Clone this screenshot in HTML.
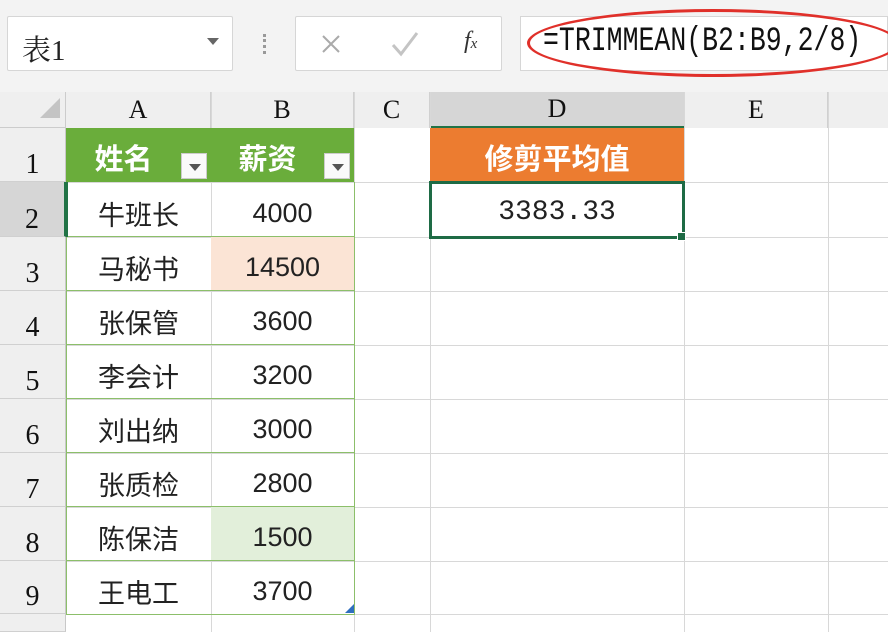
<!DOCTYPE html>
<html><head><meta charset="utf-8"><style>
*{margin:0;padding:0;box-sizing:border-box}
body{width:888px;height:632px;overflow:hidden;background:#fff;position:relative;font-family:"Liberation Sans","Noto Sans CJK SC",sans-serif}
.a{position:absolute}
.hd{background:#efefef;color:#111;font-family:"Liberation Serif","Noto Serif CJK SC",serif;font-size:26px;display:flex;align-items:center;justify-content:center}
.rn{background:#efefef;color:#111;font-family:"Liberation Serif",serif;font-size:28px;display:flex;align-items:flex-end;justify-content:center;padding-bottom:0px;border-bottom:1px solid #d0d0d0;border-right:1px solid #c8c8c8}
.c{display:flex;align-items:center;justify-content:center;font-size:27px;color:#222;padding-top:7px}
.vl{position:absolute;top:92px;bottom:0;width:1px;background:#d8d8d8}
.hl{position:absolute;left:66px;right:0;height:1px;background:#d8d8d8}
.dd{position:absolute;width:26px;height:26px;background:#fafafa;border:1px solid #ccc;right:4px;bottom:3px}
.dd:after{content:"";position:absolute;left:7px;top:10px;border-left:6px solid transparent;border-right:6px solid transparent;border-top:7px solid #555}
</style></head><body>
<div class="a" style="left:0;top:0;width:888px;height:92px;background:#f3f3f3"></div>
<div class="a" style="left:7px;top:16px;width:226px;height:55px;background:#fff;border:1px solid #d6d6d6;border-radius:2px"></div>
<div class="a" style="left:22px;top:28px;font-size:29px;color:#222;font-family:'Liberation Serif','Noto Serif CJK SC',serif">表1</div>
<div class="a" style="left:207px;top:38px;border-left:6px solid transparent;border-right:6px solid transparent;border-top:7px solid #666"></div>
<div class="a" style="left:263px;top:34px;width:3px;height:20px;border-left:3px dotted #999"></div>
<div class="a" style="left:295px;top:16px;width:207px;height:55px;background:#fff;border:1px solid #d6d6d6;border-radius:2px"></div>
<svg class="a" style="left:320px;top:33px" width="22" height="22"><path d="M3 3L19 19M19 3L3 19" stroke="#aaa" stroke-width="2"/></svg>
<svg class="a" style="left:390px;top:30px" width="30" height="28"><path d="M3 15L11 24L27 3" stroke="#c4c4c4" stroke-width="3" fill="none"/></svg>
<div class="a" style="left:464px;top:28px;font-size:24px;color:#333;font-style:italic;font-family:'Liberation Serif',serif">f<span style="font-size:15px">x</span></div>
<div class="a" style="left:520px;top:16px;width:368px;height:55px;background:#fff;border:1px solid #d6d6d6"></div>
<div class="a" style="left:543px;top:23px;font-size:34px;color:#111;font-family:'Liberation Mono',monospace;transform:scaleX(0.78);transform-origin:left;white-space:nowrap">=TRIMMEAN(B2:B9,2/8)</div>
<div class="a" style="left:527px;top:9px;width:372px;height:68px;border:3px solid #e0302a;border-radius:50%"></div>
<!-- column headers -->
<div class="a hd" style="left:0;top:92px;width:66px;height:36px;border-right:1px solid #ccc;border-bottom:1px solid #ccc"></div>
<div class="a" style="left:40px;top:98px;width:0;height:0;border-left:20px solid transparent;border-bottom:20px solid #c4c4c4"></div>
<div class="a hd" style="left:66px;top:92px;width:145px;height:36px;border-right:1px solid #d0d0d0">A</div>
<div class="a hd" style="left:211px;top:92px;width:143px;height:36px;border-right:1px solid #d0d0d0">B</div>
<div class="a hd" style="left:354px;top:92px;width:76px;height:36px;border-right:1px solid #d0d0d0">C</div>
<div class="a hd" style="left:430px;top:92px;width:254px;height:36px;background:#d6d6d6;border-bottom:2px solid #217346">D</div>
<div class="a hd" style="left:684px;top:92px;width:144px;height:36px;border-left:1px solid #d0d0d0;border-right:1px solid #d0d0d0">E</div>
<div class="a hd" style="left:828px;top:92px;width:60px;height:36px"></div>
<!-- grid -->
<div class="vl" style="left:354px"></div><div class="vl" style="left:430px"></div><div class="vl" style="left:684px"></div><div class="vl" style="left:828px"></div>
<div class="vl" style="left:211px"></div>
<div class="hl" style="top:182px"></div><div class="hl" style="top:237px"></div><div class="hl" style="top:291px"></div><div class="hl" style="top:345px"></div><div class="hl" style="top:399px"></div><div class="hl" style="top:453px"></div><div class="hl" style="top:507px"></div><div class="hl" style="top:561px"></div><div class="hl" style="top:614px"></div>
<!-- row numbers -->
<div class="a rn" style="left:0;top:128px;width:66px;height:54px">1</div>
<div class="a rn" style="left:0;top:182px;width:66px;height:55px;background:#d6d6d6;border-right:2px solid #217346">2</div>
<div class="a rn" style="left:0;top:237px;width:66px;height:54px">3</div>
<div class="a rn" style="left:0;top:291px;width:66px;height:54px">4</div>
<div class="a rn" style="left:0;top:345px;width:66px;height:54px">5</div>
<div class="a rn" style="left:0;top:399px;width:66px;height:54px">6</div>
<div class="a rn" style="left:0;top:453px;width:66px;height:54px">7</div>
<div class="a rn" style="left:0;top:507px;width:66px;height:54px">8</div>
<div class="a rn" style="left:0;top:561px;width:66px;height:53px">9</div>
<div class="a rn" style="left:0;top:614px;width:66px;height:18px"></div>
<!-- table header -->
<div class="a" style="left:66px;top:128px;width:288px;height:54px;background:#6aad3b"></div>
<div class="a c" style="left:66px;top:128px;width:145px;height:54px;color:#fff;font-weight:bold;font-size:29px;padding-right:30px;padding-top:4px">姓名<div class="dd"></div></div>
<div class="a c" style="left:211px;top:128px;width:143px;height:54px;color:#fff;font-weight:bold;font-size:29px;padding-right:30px;padding-top:4px">薪资<div class="dd"></div></div>
<div class="a c" style="left:430px;top:128px;width:254px;height:54px;background:#ec7c30;color:#fff;font-weight:bold;font-size:29px;padding-top:4px">修剪平均值</div>
<!-- table body -->
<div class="a" style="left:211px;top:237px;width:143px;height:54px;background:#fbe4d5"></div>
<div class="a" style="left:211px;top:507px;width:143px;height:54px;background:#e2efda"></div>
<div class="a" style="left:66px;top:182px;width:289px;height:433px;border-left:1px solid #8cbf6a;border-right:1px solid #8cbf6a;border-bottom:1px solid #8cbf6a"></div>
<div class="a" style="left:66px;top:236px;width:289px;height:1px;background:#8cbf6a"></div>
<div class="a" style="left:66px;top:290px;width:289px;height:1px;background:#8cbf6a"></div>
<div class="a" style="left:66px;top:344px;width:289px;height:1px;background:#8cbf6a"></div>
<div class="a" style="left:66px;top:398px;width:289px;height:1px;background:#8cbf6a"></div>
<div class="a" style="left:66px;top:452px;width:289px;height:1px;background:#8cbf6a"></div>
<div class="a" style="left:66px;top:506px;width:289px;height:1px;background:#8cbf6a"></div>
<div class="a" style="left:66px;top:560px;width:289px;height:1px;background:#8cbf6a"></div>
<div class="a" style="left:66px;top:182px;width:2px;height:55px;background:#217346"></div>
<div class="a" style="left:345px;top:604px;width:0;height:0;border-left:9px solid transparent;border-bottom:9px solid #2f6fbf"></div>
<div class="a c" style="left:66px;top:182px;width:145px;height:55px">牛班长</div><div class="a c" style="left:211px;top:182px;width:143px;height:55px">4000</div>
<div class="a c" style="left:66px;top:237px;width:145px;height:54px">马秘书</div><div class="a c" style="left:211px;top:237px;width:143px;height:54px">14500</div>
<div class="a c" style="left:66px;top:291px;width:145px;height:54px">张保管</div><div class="a c" style="left:211px;top:291px;width:143px;height:54px">3600</div>
<div class="a c" style="left:66px;top:345px;width:145px;height:54px">李会计</div><div class="a c" style="left:211px;top:345px;width:143px;height:54px">3200</div>
<div class="a c" style="left:66px;top:399px;width:145px;height:54px">刘出纳</div><div class="a c" style="left:211px;top:399px;width:143px;height:54px">3000</div>
<div class="a c" style="left:66px;top:453px;width:145px;height:54px">张质检</div><div class="a c" style="left:211px;top:453px;width:143px;height:54px">2800</div>
<div class="a c" style="left:66px;top:507px;width:145px;height:54px">陈保洁</div><div class="a c" style="left:211px;top:507px;width:143px;height:54px">1500</div>
<div class="a c" style="left:66px;top:561px;width:145px;height:53px">王电工</div><div class="a c" style="left:211px;top:561px;width:143px;height:53px">3700</div>
<!-- D2 -->
<div class="a c" style="left:429px;top:181px;width:256px;height:58px;border:3px solid #1e6b45;background:#fff;font-family:'Liberation Mono',monospace;font-size:28px;padding-top:4px">3383.33</div>
<div class="a" style="left:677px;top:232px;width:9px;height:9px;background:#1e6b45;border:1px solid #fff"></div>
</body></html>
